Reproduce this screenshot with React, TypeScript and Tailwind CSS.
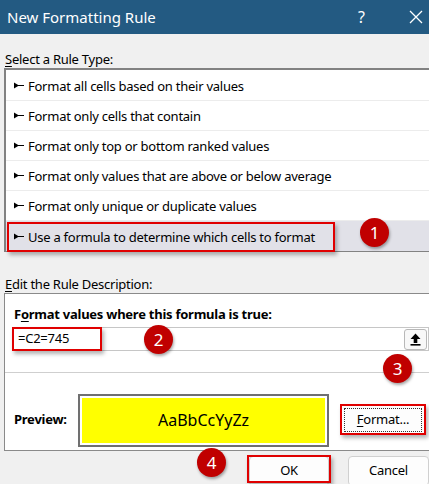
import { type FC, type ReactNode } from "react";

const rules = [
  "Format all cells based on their values",
  "Format only cells that contain",
  "Format only top or bottom ranked values",
  "Format only values that are above or below average",
  "Format only unique or duplicate values",
  "Use a formula to determine which cells to format",
];

const Pointer = () => (
  <svg width="10" height="7" viewBox="0 0 10 7" className="shrink-0">
    <polygon points="0,0.5 0,6.5 5,3.5" fill="#000" />
    <rect x="4" y="3" width="6" height="1" fill="#000" />
  </svg>
);

const Badge: FC<{ n: number; className: string }> = ({ n, className }) => (
  <div
    className={`absolute w-[29px] h-[29px] rounded-full bg-[#c00000] text-white text-[17px] leading-none flex items-center justify-center shadow-[1px_2px_3px_rgba(0,0,0,0.35)] ${className}`}
  >
    {n}
  </div>
);

const RedBox: FC<{ className: string }> = ({ className }) => (
  <div
    className={`absolute border-2 border-[#e00000] shadow-[2px_3px_4px_rgba(0,0,0,0.3)] pointer-events-none ${className}`}
  />
);

const Btn: FC<{ children: ReactNode; className?: string }> = ({ children, className }) => (
  <div
    className={`flex items-center justify-center bg-[#fdfdfd] border border-[#d0d0d0] rounded-[4px] text-[13px] text-black ${className ?? ""}`}
  >
    {children}
  </div>
);

export default function App() {
  return (
    <div className="relative w-[429px] h-[484px] overflow-hidden bg-[#f0f0f0] font-['Noto_Sans',sans-serif] text-[13px] tracking-[-0.25px] text-black">
      <div className="h-[34px] bg-[#235a82] flex items-center pl-[7px] text-white text-[15px] tracking-normal">
        <span>New Formatting Rule</span>
        <span className="ml-auto mr-[44px] text-[16px]">?</span>
        <svg width="14" height="14" viewBox="0 0 14 14" className="mr-[6px]">
          <path d="M1 1L13 13M13 1L1 13" stroke="#fff" strokeWidth="1.3" />
        </svg>
      </div>

      <div className="pl-[5px] pt-[16px] h-[33px] leading-[18px]">
        <span className="underline underline-offset-2">S</span>elect a Rule Type:
      </div>

      <div className="ml-[4px] mt-px h-[184px] border-2 border-r-0 border-[#828282] bg-white pt-px">
        {rules.map((r, i) => (
          <div
            key={r}
            className={`relative h-[30px] flex items-center gap-[4px] pl-[8px] ${
              i < 5 ? "border-b border-[#ececec]" : "bg-[#e1e1e8]"
            }`}
          >
            <Pointer />
            <span className="pt-[3px]">{r}</span>
            {i === 5 && <RedBox className="left-px top-px w-[328px] h-[30px]" />}
          </div>
        ))}
      </div>

      <div className="pl-[5px] pt-[23px] h-[41px] leading-[18px]">
        <span className="underline underline-offset-2">E</span>dit the Rule Description:
      </div>

      <div className="ml-[4px] h-[158px] border border-r-0 border-[#8a8a8a] bg-white flex flex-col">
        <div className="pl-[9px] pt-[11px] h-[33px] font-bold text-[13px] leading-[18px]">
          F<span className="underline underline-offset-2">o</span>rmat values where this formula is true:
        </div>
        <div className="relative ml-[7px] h-[24px] border border-[#c6c6c6] flex items-center pl-[5px]">
          <span>=C2=745</span>
          <div className="ml-auto mr-px w-[23px] h-[21px] border border-[#b8b8b8] rounded-[3px] bg-[#f8f8f8] flex items-center justify-center">
            <svg width="11" height="13" viewBox="0 0 11 13">
              <path d="M5.5 0.5L10.5 6H7.3V10H3.7V6H0.5Z" fill="#000" />
              <rect x="0.5" y="11" width="10" height="1.6" fill="#000" />
            </svg>
          </div>
          <RedBox className="-left-px -top-px w-[90px] h-[24px]" />
        </div>
        <div className="mt-[21px] h-px bg-[#cfcfcf]" />
        <div className="flex items-center flex-1 pl-[9px] pt-[17px]">
          <span className="font-bold w-[64px]">Preview:</span>
          <div className="w-[251px] h-[53px] border-2 border-[#707070] p-[2px]">
            <div className="w-full h-full bg-[#ffff00] flex items-center justify-center text-[16px] tracking-normal">
              AaBbCcYyZz
            </div>
          </div>
          <div className="relative ml-[12px]">
            <div className="w-[84px] h-[30px] bg-[#fdfdfd] border border-[#0078d7] p-[2px]">
              <div className="w-full h-full border border-dotted border-[#333] flex items-center justify-center">
                <span>
                  <span className="underline underline-offset-2">F</span>ormat...
                </span>
              </div>
            </div>
            <RedBox className="-left-px -top-px w-[86px] h-[31px]" />
          </div>
        </div>
      </div>

      <div className="flex pt-[5px] pl-[249px] gap-[19px]">
        <div className="relative">
          <Btn className="w-[80px] h-[30px]">OK</Btn>
          <RedBox className="-left-[2px] -top-px w-[84px] h-[28px]" />
        </div>
        <Btn className="w-[84px] h-[30px]">Cancel</Btn>
      </div>

      <Badge n={1} className="left-[360px] top-[218px]" />
      <Badge n={2} className="left-[144px] top-[325px]" />
      <Badge n={3} className="left-[383px] top-[354px]" />
      <Badge n={4} className="left-[197px] top-[448px]" />
    </div>
  );
}
